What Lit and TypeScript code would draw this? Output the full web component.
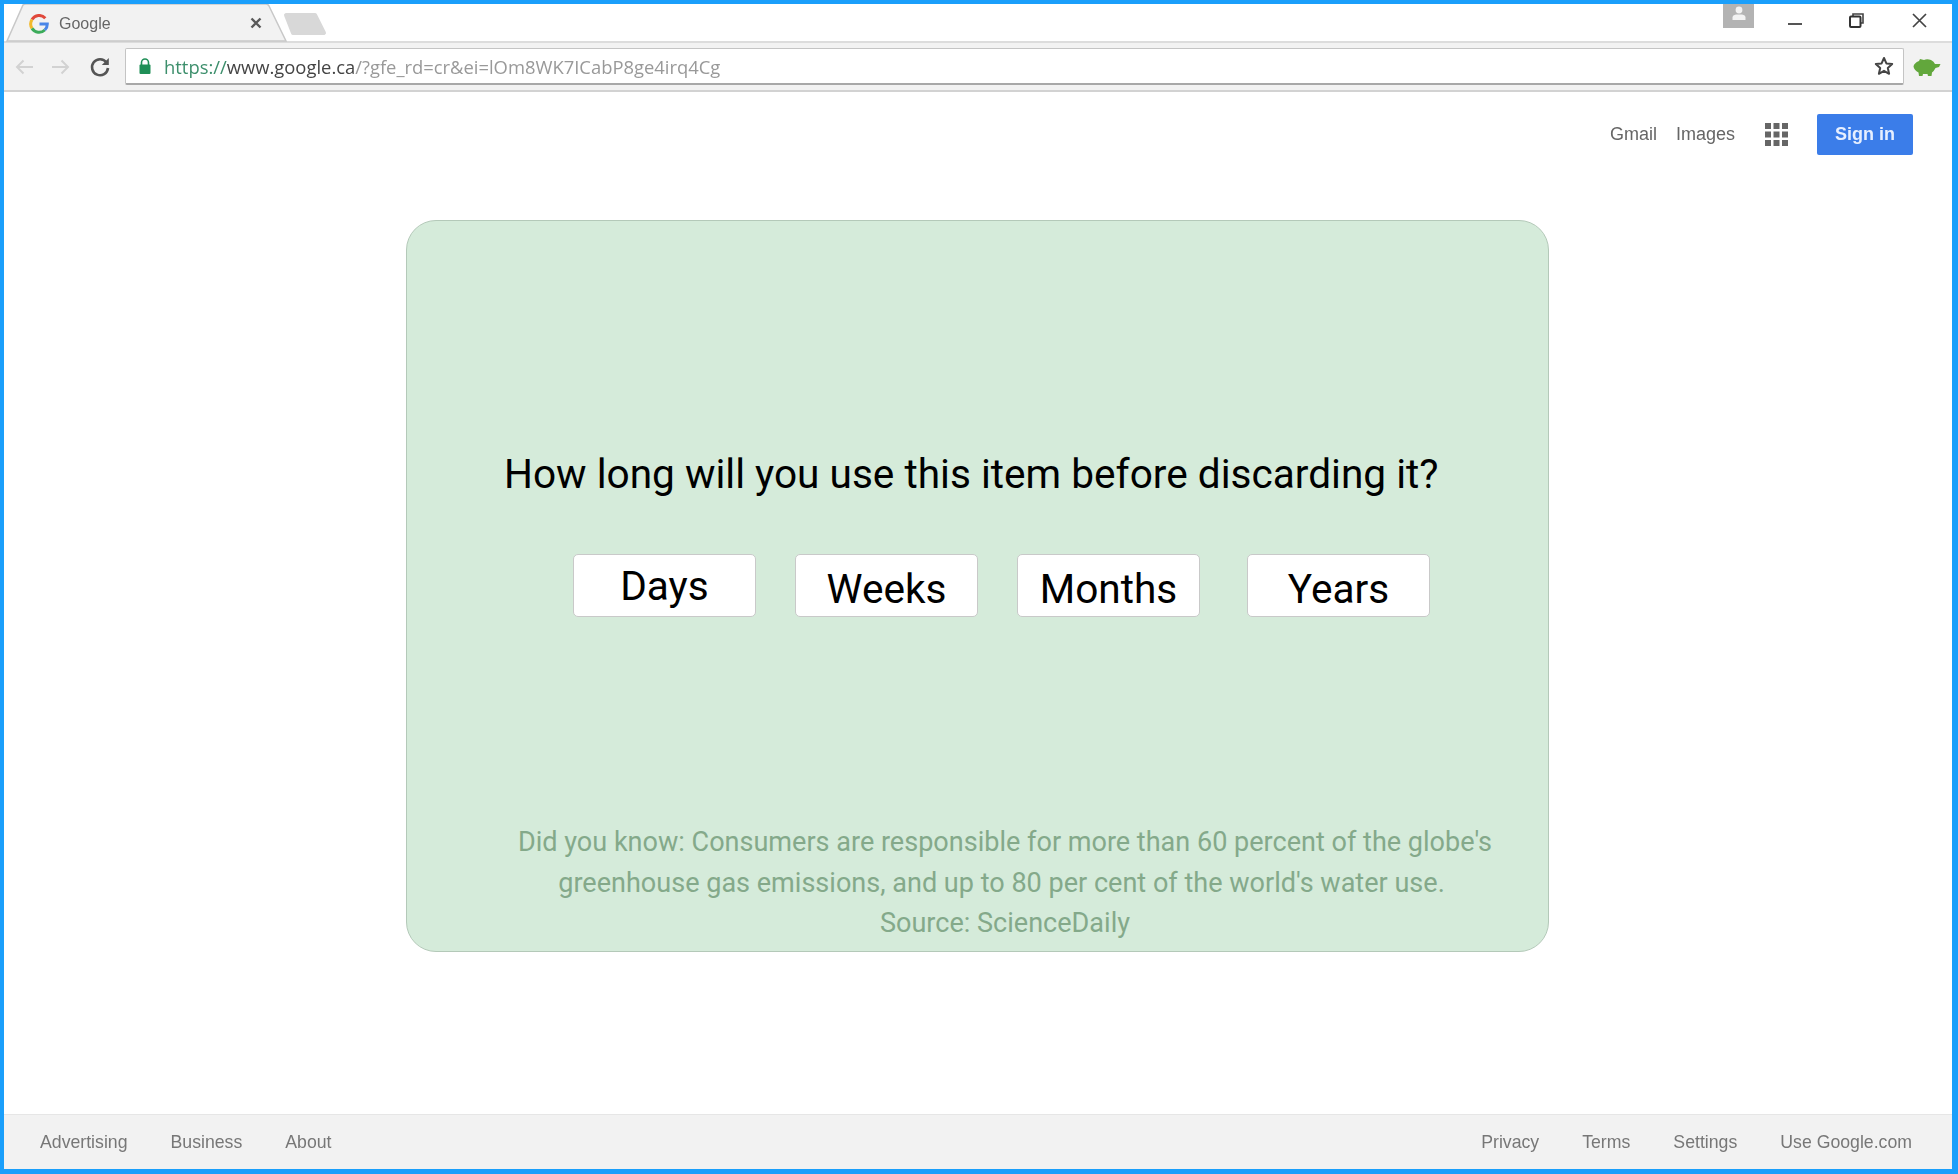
import { LitElement, html, css } from "lit";
import { customElement } from "lit/decorators.js";

@customElement("app-root")
export class AppRoot extends LitElement {
  static styles = css`
    :host {
      display: block;
      width: 1958px;
      height: 1174px;
      box-sizing: border-box;
      border-style: solid;
      border-color: #1a9ffb;
      border-width: 4px 6px 5px 4px;
      background: #fff;
      font-family: "Liberation Sans", Arial, sans-serif;
      overflow: hidden;
    }
    .window {
      display: flex;
      flex-direction: column;
      height: 100%;
    }

    /* browser chrome */
    .tabstrip {
      position: relative;
      height: 37px;
      display: flex;
      flex: none;
    }
    .tab-bg {
      position: absolute;
      left: 0;
      top: 0;
    }
    .tab {
      position: relative;
      width: 280px;
      box-sizing: border-box;
      padding: 10px 0 0 25px;
      display: flex;
      align-items: flex-start;
      gap: 10px;
      height: 37px;
      font-size: 16px;
      line-height: 20px;
      color: #666;
      filter: blur(0.5px);
    }
    .tab .close {
      margin-left: auto;
      margin-right: 22px;
      margin-top: 3px;
    }
    .wincontrols {
      margin-left: auto;
      display: flex;
      align-items: flex-start;
    }
    .avatar {
      width: 31px;
      height: 24px;
      background: #b3b3b3;
      display: flex;
      justify-content: center;
      margin-right: 34px;
    }
    .winbtn {
      display: block;
      margin-top: 9px;
      filter: blur(0.4px);
    }
    .win-min { margin-right: 47px; }
    .win-restore { margin-right: 48px; }
    .win-close { margin-right: 25px; }

    .toolbar {
      flex: none;
      height: 51px;
      box-sizing: border-box;
      background: #f2f2f2;
      border-top: 2px solid #dcdcdc;
      border-bottom: 2px solid #d2d2d2;
      display: flex;
      align-items: center;
      padding-left: 10px;
    }
    .nav {
      display: block;
      flex: none;
    }
    .omnibox {
      margin-left: 14px;
      width: 1779px;
      height: 37px;
      box-sizing: border-box;
      background: #fff;
      border: 1px solid #c4c4c4;
      border-bottom: 2px solid #a8a8a8;
      border-radius: 2px;
      display: flex;
      align-items: center;
      padding-left: 12px;
      flex: none;
    }
    .url {
      margin-left: 12px;
      font-family: "Open Sans", sans-serif;
      font-size: 18.4px;
      color: #999;
      white-space: nowrap;
      filter: blur(0.5px);
    }
    .url .https { color: #3d8f6c; }
    .url .host { color: #444; }
    .star { margin-left: auto; margin-right: 9px; }
    .pig { margin-left: 9px; flex: none; }

    /* google page */
    .page {
      flex: 1;
      min-height: 0;
      display: flex;
      flex-direction: column;
    }
    .topbar {
      display: flex;
      align-items: center;
      justify-content: flex-end;
      height: 41px;
      margin-top: 22px;
      padding-right: 39px;
      font-size: 18px;
      color: #666;
      flex: none;
    }
    .topbar span {
      filter: blur(0.5px);
    }
    .gmail { margin-right: 19px; }
    .apps { margin-left: 30px; margin-right: 29px; display: block; }
    .signin {
      width: 96px;
      height: 41px;
      background: #3b7de9;
      border-radius: 2px;
      color: #e6efff;
      font-weight: bold;
      display: flex;
      align-items: center;
      justify-content: center;
    }

    .card {
      margin: 65px 0 0 402px;
      width: 1143px;
      height: 732px;
      box-sizing: border-box;
      background: #d5ebda;
      border: 1px solid #b4c9b9;
      border-radius: 30px;
      display: flex;
      flex-direction: column;
      font-family: Roboto, sans-serif;
      flex: none;
    }
    .question {
      margin: 229px 0 0 97px;
      font-size: 40.6px;
      line-height: 48px;
      color: #000;
      white-space: nowrap;
    }
    .answers {
      margin: 56px 0 0 166px;
      display: flex;
    }
    .answer {
      width: 183px;
      height: 63px;
      box-sizing: border-box;
      background: #fff;
      border: 1px solid #c9c9c9;
      border-radius: 5px;
      font-size: 40.6px;
      line-height: 65px;
      text-align: center;
      color: #000;
      margin-right: 39px;
      padding-top: 2px;
    }
    .answer.days {
      line-height: 62px;
      padding-top: 0;
    }
    .answer.months { margin-right: 47px; }
    .answer.years { margin-right: 0; }
    .fact {
      margin: 205px 0 0 48px;
      width: 1100px;
      font-size: 27.05px;
      line-height: 40.6px;
      text-align: center;
      color: #84a98a;
    }
    .fact .line {
      display: block;
    }
    .fact .line.second {
      padding-right: 7px;
    }

    .footer {
      margin-top: auto;
      height: 55px;
      box-sizing: border-box;
      background: #f2f2f2;
      border-top: 1px solid #e6e6e6;
      display: flex;
      align-items: center;
      justify-content: space-between;
      padding: 0 40px 0 36px;
      font-size: 17.7px;
      color: #777;
      flex: none;
    }
    .footer div {
      display: flex;
      gap: 43px;
      filter: blur(0.5px);
    }
  `;

  render() {
    return html`
      <div class="window">
        <div class="tabstrip">
          <svg class="tab-bg" width="340" height="38" viewBox="0 0 340 38">
            <path d="M3 37 L19 1 Q20 0 22 0 H262 Q264 0 265 2 L282 37 Z" fill="#f2f2f2" stroke="#c8c8c8" stroke-width="1.5" />
            <path d="M282 11 H311 L320 29 H289 Z" fill="#d8d8d8" stroke="#d8d8d8" stroke-width="4" stroke-linejoin="round" />
          </svg>
          <div class="tab">
            <svg width="20" height="20" viewBox="0 0 20 20" style="flex:none">
              <path d="M16.3 4.2 A8.3 8.3 0 0 0 3 5.6" fill="none" stroke="#e0483b" stroke-width="3" />
              <path d="M3 5.6 A8.3 8.3 0 0 0 3 14.4" fill="none" stroke="#f1b92c" stroke-width="3" />
              <path d="M3 14.4 A8.3 8.3 0 0 0 15.8 16" fill="none" stroke="#3bab5a" stroke-width="3" />
              <path d="M15.8 16 A8.3 8.3 0 0 0 18.3 10 H10.5" fill="none" stroke="#4a86e8" stroke-width="3" />
            </svg>
            <span>Google</span>
            <svg class="close" width="12" height="12" viewBox="0 0 12 12">
              <path d="M1.5 1.5 L10.5 10.5 M10.5 1.5 L1.5 10.5" stroke="#5a5a5a" stroke-width="2.4" />
            </svg>
          </div>
          <div class="wincontrols">
            <div class="avatar">
              <svg width="14" height="16" viewBox="0 0 14 16">
                <circle cx="7" cy="6" r="3.4" fill="#f2f2f2" />
                <path d="M0.5 16 V13.5 Q0.5 11 4 10.5 H10 Q13.5 11 13.5 13.5 V16 Z" fill="#f2f2f2" />
              </svg>
            </div>
            <svg class="winbtn win-min" width="14" height="16" viewBox="0 0 14 16">
              <path d="M0 11 H14" stroke="#555" stroke-width="2" />
            </svg>
            <svg class="winbtn win-restore" width="15" height="15" viewBox="0 0 15 15">
              <path d="M4 3 V1 H14 V10 H12" fill="none" stroke="#444" stroke-width="1.6" />
              <rect x="1" y="3.5" width="10.5" height="10.5" rx="1" fill="none" stroke="#333" stroke-width="2" />
            </svg>
            <svg class="winbtn win-close" width="15" height="15" viewBox="0 0 15 15">
              <path d="M1 1 L14 14 M14 1 L1 14" stroke="#444" stroke-width="1.7" />
            </svg>
          </div>
        </div>

        <div class="toolbar">
          <svg class="nav" width="20" height="18" viewBox="0 0 20 18">
            <path d="M19 9 H3 M9.5 2.5 L3 9 L9.5 15.5" fill="none" stroke="#d2d2d2" stroke-width="2" />
          </svg>
          <svg class="nav" style="margin-left:17px" width="20" height="18" viewBox="0 0 20 18">
            <path d="M1 9 H17 M10.5 2.5 L17 9 L10.5 15.5" fill="none" stroke="#d2d2d2" stroke-width="2" />
          </svg>
          <svg class="nav" style="margin-left:18px" width="22" height="22" viewBox="0 0 22 22">
            <path d="M17.5 6.5 A8 8 0 1 0 19 12" fill="none" stroke="#555" stroke-width="2.6" />
            <path d="M19.8 2 V9 H12.8 Z" fill="#555" />
          </svg>
          <div class="omnibox">
            <svg width="14" height="17" viewBox="0 0 14 17" style="flex:none">
              <path d="M3.5 7 V4.5 A3.5 3.5 0 0 1 10.5 4.5 V7" fill="none" stroke="#1f8f57" stroke-width="1.6" />
              <rect x="1.5" y="6.5" width="11" height="9.5" rx="1" fill="#1f8f57" />
            </svg>
            <span class="url"><span class="https">https://</span><span class="host">www.google.ca</span>/?gfe_rd=cr&amp;ei=lOm8WK7ICabP8ge4irq4Cg</span>
            <svg class="star" width="20" height="20" viewBox="0 0 20 20">
              <path d="M10 2 L12.4 7.4 L18.2 8 L13.8 12 L15.1 17.8 L10 14.8 L4.9 17.8 L6.2 12 L1.8 8 L7.6 7.4 Z" fill="none" stroke="#444" stroke-width="2" stroke-linejoin="round" />
            </svg>
          </div>
          <svg class="pig" width="28" height="20" viewBox="0 0 28 20">
            <path d="M7 2 L11 3 Q14 1.5 18 3 Q21 4.5 22 7 L27.5 7 L26 10 L22.5 11 Q21 14 19 15.5 L18.5 19 H15 L14.5 17 H10 L9.5 19 H6 L5.5 15.5 Q1 13 0.5 9.5 Q1 6 6 4 Z" fill="#62a73c" />
          </svg>
        </div>

        <div class="page">
          <div class="topbar">
            <span class="gmail">Gmail</span>
            <span>Images</span>
            <svg class="apps" width="23" height="23" viewBox="0 0 23 23" fill="#666">
              <rect x="0" y="0" width="6" height="6" /><rect x="8.5" y="0" width="6" height="6" /><rect x="17" y="0" width="6" height="6" />
              <rect x="0" y="8.5" width="6" height="6" /><rect x="8.5" y="8.5" width="6" height="6" /><rect x="17" y="8.5" width="6" height="6" />
              <rect x="0" y="17" width="6" height="6" /><rect x="8.5" y="17" width="6" height="6" /><rect x="17" y="17" width="6" height="6" />
            </svg>
            <span class="signin">Sign in</span>
          </div>

          <div class="card">
            <div class="question">How long will you use this item before discarding it?</div>
            <div class="answers">
              <div class="answer days">Days</div>
              <div class="answer">Weeks</div>
              <div class="answer months">Months</div>
              <div class="answer years">Years</div>
            </div>
            <div class="fact">
              <span class="line">Did you know: Consumers are responsible for more than 60 percent of the globe's</span>
              <span class="line second">greenhouse gas emissions, and up to 80 per cent of the world's water use.</span>
              <span class="line">Source: ScienceDaily</span>
            </div>
          </div>

          <div class="footer">
            <div><span>Advertising</span><span>Business</span><span>About</span></div>
            <div><span>Privacy</span><span>Terms</span><span>Settings</span><span>Use Google.com</span></div>
          </div>
        </div>
      </div>
    `;
  }
}
